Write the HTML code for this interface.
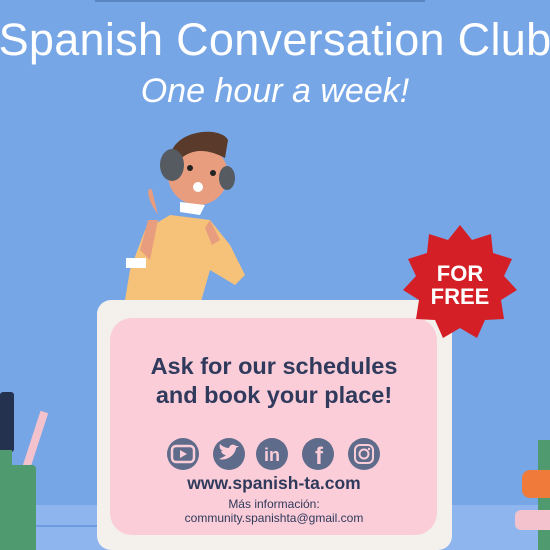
<!DOCTYPE html>
<html><head><meta charset="utf-8"><style>
body{margin:0;width:550px;height:550px;overflow:hidden;background:#76a6e6;font-family:"Liberation Sans",sans-serif;position:relative}
.a{position:absolute}
.t{left:-60px;width:670px;text-align:center;color:#fff;white-space:nowrap}
</style></head><body>
<div class="a" style="left:95px;top:0;width:330px;height:2px;background:#5a86c4"></div>
<div class="a t" style="top:14px;font-size:45px;letter-spacing:0.3px">Spanish Conversation Club</div>
<div class="a t" style="top:72px;font-size:34px;font-style:italic;font-weight:300">One hour a week!</div>
<div class="a" style="left:0;top:505px;width:550px;height:45px;background:#8fb5ee"></div>
<div class="a" style="left:30px;top:525px;width:100px;height:2px;background:#6e9be0"></div>
<svg class="a" style="left:100px;top:120px" width="180" height="190" viewBox="0 0 180 190">
<path d="M45 110 L30 150 L25 180 L100 185 L110 150 L135 165 L145 155 L130 125 L110 100 L70 95 Z" fill="#f6c27a"/>
<path d="M55 90 C45 75 48 65 52 70 L58 95 Z" fill="#e89d7e"/>
<path d="M40 130 L48 100 L58 100 L50 140 Z" fill="#e89d7e"/>
<rect x="26" y="138" width="20" height="10" fill="#fff"/>
<path d="M110 100 L120 120 L112 125 L105 108Z" fill="#e89d7e"/>
<circle cx="98" cy="55" r="30" fill="#e89d7e"/>
<path d="M70 40 C70 10 120 5 128 20 L125 38 C110 30 90 25 75 45 Z" fill="#5a3a2a"/>
<ellipse cx="72" cy="45" rx="12" ry="16" fill="#555b60"/>
<ellipse cx="127" cy="58" rx="8" ry="12" fill="#555b60"/>
<circle cx="90" cy="48" r="3" fill="#222"/><circle cx="113" cy="53" r="3" fill="#222"/>
<circle cx="98" cy="67" r="5" fill="#fff"/>
<path d="M80 82 L105 85 L100 95 L80 92Z" fill="#fff"/>
</svg>
<div class="a" style="left:97px;top:300px;width:355px;height:250px;background:#f4f1ec;border-radius:14px"></div>
<div class="a" style="left:110px;top:318px;width:327px;height:217px;background:#fbcdd8;border-radius:22px"></div>
<div class="a" style="left:90px;top:352px;width:368px;text-align:center;color:#2f3a5c;font-weight:bold;font-size:23.5px;line-height:29px">Ask for our schedules<br>and book your place!</div>
<svg class="a" style="left:160px;top:436px" width="230" height="36" viewBox="0 0 230 36">
<g fill="#5f6b8b">
<circle cx="23" cy="18" r="16"/><circle cx="69" cy="18" r="16"/><circle cx="112" cy="18" r="16"/><circle cx="158" cy="18" r="16"/><circle cx="204" cy="18" r="16"/>
</g>
<rect x="12" y="10" width="22" height="16" rx="4" fill="none" stroke="#fbcdd8" stroke-width="2.5"/>
<path d="M20 14 L27 18 L20 22Z" fill="#fbcdd8"/>
<path d="M59 23 C66 25 75 20 76 12 L79 10 L76 10 C74 8 70 8 69 12 C65 12 62 10 60 8 C59 11 60 14 63 15 L61 15 C62 18 64 19 66 19 C64 21 61 22 59 23Z" fill="#fbcdd8"/>
<text x="112" y="25" font-family="Liberation Sans" font-weight="bold" font-size="18" fill="#fbcdd8" text-anchor="middle">in</text>
<text x="159" y="28" font-family="Liberation Sans" font-weight="bold" font-size="24" fill="#fbcdd8" text-anchor="middle">f</text>
<rect x="195" y="9" width="18" height="18" rx="5" fill="none" stroke="#fbcdd8" stroke-width="2"/>
<circle cx="204" cy="18" r="4.5" fill="none" stroke="#fbcdd8" stroke-width="2"/>
<circle cx="209" cy="13" r="1.2" fill="#fbcdd8"/>
</svg>
<div class="a" style="left:100px;top:473px;width:348px;text-align:center;color:#2f3a5c;font-weight:bold;font-size:17.5px">www.spanish-ta.com</div>
<div class="a" style="left:90px;top:497px;width:368px;text-align:center;color:#2f3a5c;font-size:12px;line-height:14px">Más información:<br>community.spanishta@gmail.com</div>
<svg class="a" style="left:400px;top:222px" width="120" height="120" viewBox="-60 -60 120 120">
<polygon fill="#d41f26" points="0,-57 12,-42 31,-48 33,-29 52,-23 44,-6 57,8 41,18 44,37 25,38 17,56 0,46 -17,56 -25,38 -44,37 -41,18 -57,8 -44,-6 -52,-23 -33,-29 -31,-48 -12,-42"/>
<text x="0" y="-1" text-anchor="middle" font-family="Liberation Sans" font-weight="bold" font-size="22" fill="#fff">FOR</text>
<text x="0" y="22" text-anchor="middle" font-family="Liberation Sans" font-weight="bold" font-size="22" fill="#fff">FREE</text>
</svg>
<div class="a" style="left:0;top:392px;width:14px;height:60px;background:#24314f;border-radius:3px"></div>
<div class="a" style="left:0;top:450px;width:12px;height:40px;background:#4f9a6e"></div>
<div class="a" style="left:28px;top:410px;width:8px;height:80px;background:#f4c2cc;transform:rotate(18deg)"></div>
<div class="a" style="left:0;top:465px;width:36px;height:85px;background:#4f9a6e;border-radius:0 4px 0 0"></div>
<div class="a" style="left:538px;top:440px;width:12px;height:110px;background:#4f9a6e"></div>
<div class="a" style="left:522px;top:470px;width:28px;height:28px;background:#f07a3a;border-radius:8px 0 0 8px"></div>
<div class="a" style="left:515px;top:510px;width:35px;height:20px;background:#f4c2cc;border-radius:6px 0 0 6px"></div>
</body></html>
